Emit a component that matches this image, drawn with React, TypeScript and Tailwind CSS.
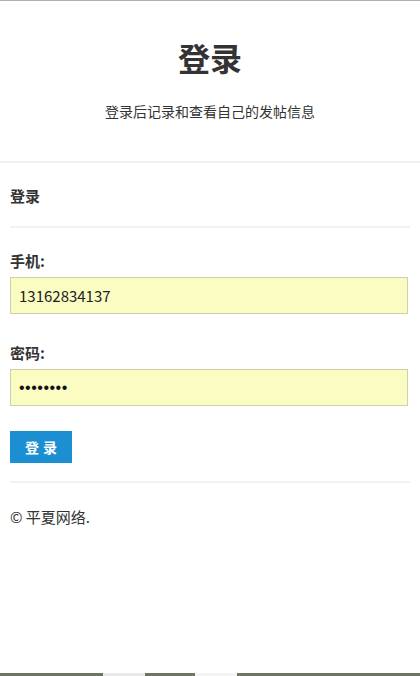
import React, { useState } from 'react';

const FONT = { fontFamily: '"Microsoft YaHei", "Noto Sans CJK SC", "Liberation Sans", sans-serif' };

const App: React.FC = () => {
  const [phone, setPhone] = useState('13162834137');
  const [password, setPassword] = useState('12345678');

  return (
    <div className="min-h-[676px] flex flex-col bg-white text-[#333]" style={FONT}>
      <div className="h-px bg-[#b0b0b0]" />

      <header className="flex flex-col items-center pt-[36px] pb-[40px] border-b-2 border-[#f0f0f0]">
        <h1 className="text-[32px] leading-[40px] font-bold text-[#333]">登录</h1>
        <p className="mt-[24px] text-[14px] leading-[20px] text-[#333]">登录后记录和查看自己的发帖信息</p>
      </header>

      <main className="flex-1 px-[10px] pt-[22px]">
        <div className="text-[15px] leading-[22px] font-semibold pb-[19px] border-b-2 border-[#f2f2f2]">登录</div>

        <form className="pt-[22px]" onSubmit={(e) => e.preventDefault()}>
          <label htmlFor="phone" className="block text-[15px] leading-[22px] font-bold mb-[5px]">
            手机:
          </label>
          <input
            id="phone"
            type="text"
            value={phone}
            onChange={(e) => setPhone(e.target.value)}
            className="block w-[398px] h-[37px] px-[8px] bg-[#fafcc2] border border-[#cfd0a8] text-[15px] text-[#222] outline-none"
          />

          <label htmlFor="password" className="block text-[15px] leading-[22px] font-bold mt-[28px] mb-[5px]">
            密码:
          </label>
          <input
            id="password"
            type="password"
            value={password}
            onChange={(e) => setPassword(e.target.value)}
            className="block w-[398px] h-[37px] px-[8px] bg-[#fafcc2] border border-[#cfd0a8] text-[16px] text-[#111] tracking-[0.5px] outline-none"
            style={{ fontFamily: '"Liberation Sans", sans-serif' }}
          />

          <button
            type="submit"
            className="mt-[25px] w-[62px] h-[32px] bg-[#1b8fd2] text-white text-[14px] font-bold tracking-[4px] pl-[4px]"
          >
            登录
          </button>
        </form>

        <div className="mt-[18px] border-b-2 border-[#f2f2f2]" />

        <footer className="pt-[23px] text-[15px] leading-[22px] text-[#333]">© 平夏网络.</footer>
      </main>

      <div className="h-[3px] bg-[#6f7566] flex">
        <div className="w-[103px]" />
        <div className="w-[42px] bg-[#e8e8e8]" />
        <div className="w-[50px]" />
        <div className="w-[42px] bg-[#f4f4f4]" />
      </div>
    </div>
  );
};

export default App;
